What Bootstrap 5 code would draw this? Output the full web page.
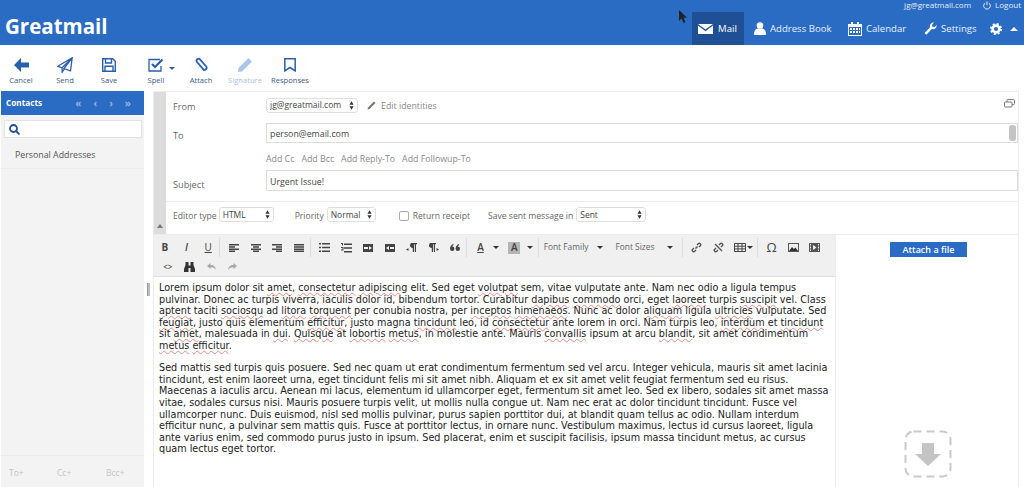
<!DOCTYPE html>
<html lang="en">
<head>
<meta charset="utf-8">
<title>Greatmail</title>
<link href="https://cdn.jsdelivr.net/npm/bootstrap@5.3.0/dist/css/bootstrap.min.css" rel="stylesheet">
<style>
html,body{height:487px;overflow:hidden;background:#fff}
body{font-family:"Open Sans",sans-serif;font-size:9px;color:#555;display:flex;flex-direction:column;width:1024px;position:relative}
.gm-head{height:45px;background:#2a6bc4;color:#fff;position:relative;flex:none}
.gm-logo{position:absolute;left:5px;top:12px;font-size:20.5px;font-weight:700;line-height:28px;font-family:"Open Sans",sans-serif}
.gm-top{position:absolute;right:3px;top:0;height:10px;font-size:8px;line-height:10px;color:#e6eefa;gap:12px}
.gm-nav{position:absolute;left:692px;right:0;top:12px;height:33px;font-size:9.6px;color:#e9f0fb}
.gm-nav-item{height:33px;padding-left:5px}
.gm-nav-item svg{margin-right:4px}
.gm-nav-txt{padding-top:2px}
.gm-active{background:#1f4f94;width:52px;padding-left:6px;color:#fff}
.gm-tools{height:46px;flex:none;position:relative;padding-left:0}
.gm-tool{position:absolute;top:12px;width:44px;margin-left:-22px;text-align:center;font-size:7.6px;line-height:10px;color:#3c5a86}
.gm-tool svg{display:block;margin:0 auto 2px;height:16px}
.gm-tool-off{color:#a9c0de}
.gm-work{flex:1;min-height:0;display:flex}
.gm-side{width:143px;margin-left:1px;background:#f3f3f3;flex:none;display:flex;flex-direction:column}
.gm-side-head{height:24px;background:#2a6bc4;color:#fff;font-weight:700;font-size:8.2px;padding:0 13px 0 5px}
.gm-side-arrows{color:#8db3e6;font-size:10px;gap:12px;font-weight:700}
.gm-search{height:18px;margin:5px 2px 0 3px;background:#fff;border:1px solid #e2e2e2;padding-left:4px}
.gm-addr{height:27px;margin-top:4px;padding:0 0 0 14px;line-height:27px;border-bottom:1px solid #ececec;font-size:8.8px;color:#555}
.gm-side-foot{margin-top:auto;height:32px;border-top:1px solid #ebebeb;color:#c3c3c3;font-size:8.5px;position:relative}
.gm-side-foot span{position:absolute;top:11px}
.gm-gutter{width:9px;flex:none;padding-left:3px}
.gm-handle{width:3px;height:13px;margin-top:192px;background:#bbb;border-left:1px solid #999}
.gm-main{flex:none;width:866px;border:1px solid #ececec;border-bottom:0;display:flex;flex-direction:column}
.gm-compose{display:flex;flex:none;height:142px}
.gm-strip{width:12px;background:#dcdcdc;flex:none;position:relative}
.gm-strip i{position:absolute;left:3px;bottom:6px;border:3.5px solid transparent;border-top:0;border-bottom:4px solid #777}
.gm-form{flex:1;min-width:0;position:relative;font-size:8.8px;color:#666}
.gm-lab{width:100px;padding-left:7px;flex:none;font-size:9.2px}
.gm-r1{height:26px}
.gm-r1 .gm-lab{padding-top:4px}
.gm-r2{height:30px}
.gm-r2 .gm-lab{padding-top:5px}
.gm-r3{height:22px;color:#8a8a8a;font-size:8.8px;padding-top:1px}
.gm-r3 span{margin-right:7px}
.gm-r4{height:32px;align-items:flex-start!important;border-bottom:1px solid #ececec}
.gm-r4 .gm-lab{padding-top:8px}
.gm-r5{height:31px;padding:0 0 6px 7px;font-size:8.6px}
.gm-r5>span{padding-top:4px}
.gm-field.form-control{height:20px;width:752px;border-radius:0;border:1px solid #dcdcdc;padding:2px 3px 0;font-size:8.8px;color:#444;font-family:inherit;box-shadow:none;min-height:0}
.gm-r4 .gm-field.form-control{height:21px}
.gm-sel.form-select{height:15px;min-height:0;border-radius:3px;border:1px solid #dedede;font-size:8.5px;padding:0 0 0 3px;line-height:12px;color:#444;font-family:inherit;background-size:5px 9px;background-position:right 3px center;background-image:url("data:image/svg+xml,%3Csvg xmlns='http://www.w3.org/2000/svg' viewBox='0 0 6 10'%3E%3Cpath d='M3 0l2.500 4h-5zM3 10l2.500-4h-5z' fill='%23333'/%3E%3C/svg%3E");width:auto}
.gm-sel.gm-w92{width:92px;margin-left:0}
.gm-sel.gm-w55{width:55px}
.gm-sel.gm-w49{width:49px}
.gm-sel.gm-w70{width:70px}
.gm-scroll{position:absolute;right:2px;top:33px;width:7px;height:16px;background:#c4c4c4;border-radius:3px}
.gm-popout{position:absolute;right:3px;top:7px}
.gm-check.form-check-input{width:10px;height:10px;margin:3px 4px 0 23px;border-radius:2px;border-color:#aaa}
.gm-edit{flex:1;min-height:0;display:flex;border-top:1px solid #ececec}
.gm-editcol{width:682px;flex:none;display:flex;flex-direction:column;border-right:1px solid #ececec}
.gm-mce{height:42px;background:#f0f0f0;border-bottom:1px solid #dedede;flex:none;padding-top:3px;color:#444}
.gm-mrow{height:19px}
.gm-btn{width:21.7px;height:19px;flex:none;font-size:9px}
.gm-grp{margin-right:3px;height:19px;padding-left:0}
.gm-sep{border-right:1px solid #dcdcdc}
.gm-drop{font-size:8.4px;color:#666;height:19px}
.gm-caret{display:inline-block;border:3px solid transparent;border-top:3px solid #333;border-bottom:0}
.gm-text{flex:1;padding:5px 0 0 5px;font-family:"DejaVu Sans",sans-serif;font-size:9.67px;line-height:11.6px;color:#222;white-space:nowrap;overflow:hidden}
.gm-text p{margin:0 0 10.6px}
.gm-sp{text-decoration:underline wavy #e58a86 1px;text-underline-offset:1px}
.gm-attach{flex:1;position:relative;text-align:center;padding-top:7px}
.gm-attach-btn.btn{width:77px;height:15px;padding:0;border-radius:0;border:1px solid #2a6bc4;background:#2a6bc4;color:#fff;font-size:9px;font-weight:600;line-height:12px;font-family:inherit;margin-left:3px}
.gm-dropzone{position:absolute;left:68px;top:195px}
.gm-cursor{position:absolute;left:678px;top:10px}
</style>
</head>
<body>
<header class="gm-head">
  <div class="gm-logo">Greatmail</div>
  <div class="gm-top d-flex align-items-center">
    <span>jg@greatmail.com</span>
    <span class="d-flex align-items-center gap-1">
      <svg width="8" height="9" viewBox="0 0 8 9" fill="none" stroke="#e6eefa" stroke-width="1"><path d="M2.200 2A3.300 3.300 0 1 0 5.800 2M4 .5v3.600"/></svg>Logout</span>
  </div>
  <nav class="gm-nav d-flex align-items-center">
    <div class="gm-nav-item gm-active d-flex align-items-center" style="margin-right:5px">
      <svg width="15" height="11" viewBox="0 0 15 11"><path d="M0 1h15L7.500 6.500zM0 2.600v8.400h15V2.600L7.500 8.200z" fill="#fff"/></svg><span class="gm-nav-txt" style="margin-left:1px">Mail</span></div>
    <div class="gm-nav-item d-flex align-items-center" style="width:94px">
      <svg width="12" height="13" viewBox="0 0 12 13"><circle cx="6" cy="3.500" r="3.300" fill="#fff"/><path d="M0 13c0-4 1-6 3.500-6.500h5C11 7 12 9 12 13z" fill="#fff"/></svg><span class="gm-nav-txt">Address Book</span></div>
    <div class="gm-nav-item d-flex align-items-center" style="width:76px">
      <svg width="14" height="14" viewBox="0 0 14 14"><path d="M0 2h3V0h2v2h4V0h2v2h3v12H0zM1 5v8h12V5z" fill="#fff"/><path d="M2 6h2v2H2zM5 6h2v2H5zM8 6h2v2H8zM11 6h1v2h-1zM2 9h2v2H2zM5 9h2v2H5zM8 9h2v2H8zM11 9h1v2h-1z" fill="#fff"/></svg><span class="gm-nav-txt">Calendar</span></div>
    <div class="gm-nav-item d-flex align-items-center" style="width:71px">
      <svg width="13" height="13" viewBox="0 0 13 13"><path d="M.5 11 6 5.500C5.300 3 7 .3 10 .5L8 3l.5 1.800 1.800.5L12.600 3c.4 3-2.300 4.800-4.800 4.100L2.300 12.700z" fill="#fff"/></svg><span class="gm-nav-txt">Settings</span></div>
    <svg width="12" height="12" viewBox="0 0 12 12"><circle cx="6" cy="6" r="3.400" fill="none" stroke="#fff" stroke-width="2.600"/><circle cx="6" cy="6" r="5" fill="none" stroke="#fff" stroke-width="2" stroke-dasharray="2 1.930"/></svg>
    <span style="margin-left:8px;border:4.500px solid transparent;border-top:0;border-bottom:4px solid #fff"></span>
  </nav>
</header>

<div class="gm-tools">
  <div class="gm-tool" style="left:21px"><svg width="15" height="14" viewBox="0 0 15 14"><path d="M7 0 0 7l7 7V9.500h8v-5H7z" fill="#2a5fae"/></svg>Cancel</div>
  <div class="gm-tool" style="left:65px"><svg width="16" height="16" viewBox="0 0 16 16" fill="none" stroke="#2a5fae" stroke-width="1.300"><path d="M15.200.8.800 9.300l4.300 1.500zM15.200.8 7 11.500l6.500 2.300zM5.100 10.800v4.400l2.400-3.300"/></svg>Send</div>
  <div class="gm-tool" style="left:109px"><svg width="14" height="14" viewBox="0 0 14 14" fill="none" stroke="#2a5fae" stroke-width="1.400"><path d="M.7.700h10l2.600 2.600v10H.7z"/><path d="M3.500 1v4h6V1M3 13V8.300h8V13"/></svg>Save</div>
  <div class="gm-tool" style="left:156px"><svg width="16" height="14" viewBox="0 0 16 14" fill="none" stroke="#2a5fae"><path stroke-width="1.300" d="M13 8v5H1V1.500h11"/><path stroke-width="2.200" d="M4 6l3 3 7.500-7.500"/></svg>Spell</div>
  <span class="position-absolute" style="left:169px;top:22px;border:3.500px solid transparent;border-top:3.500px solid #2a5fae;border-bottom:0"></span>
  <div class="gm-tool" style="left:201px"><svg width="14" height="15" viewBox="0 0 14 15" fill="none" stroke="#2a5fae" stroke-width="1.800"><path d="M10.500 13.200 3 4.500C1.500 2.500 4 0 6 1.800l6.200 7.200c1.500 2-1 4.500-3 2.700L4.300 6"/></svg>Attach</div>
  <div class="gm-tool gm-tool-off" style="left:245px"><svg width="14" height="14" viewBox="0 0 14 14"><path d="M10.500 0 14 3.500 4 13.500 0 14l.5-4z" fill="#a9c6e8"/></svg>Signature</div>
  <div class="gm-tool" style="left:290px"><svg width="12" height="14" viewBox="0 0 12 14" fill="none" stroke="#2a5fae" stroke-width="1.500"><path d="M.8.800h10.400v12L6 9.500.8 12.800z"/></svg>Responses</div>
</div>

<div class="gm-work">
  <aside class="gm-side">
    <div class="gm-side-head d-flex align-items-center justify-content-between">
      <span>Contacts</span>
      <span class="gm-side-arrows d-flex"><span>«</span><span>‹</span><span>›</span><span>»</span></span>
    </div>
    <div class="gm-search d-flex align-items-center">
      <svg width="11" height="11" viewBox="0 0 11 11" fill="none" stroke="#1f4f94" stroke-width="1.800"><circle cx="4.500" cy="4.500" r="3.500"/><path d="m7 7 3.500 3.500"/></svg>
    </div>
    <div class="gm-addr">Personal Addresses</div>
    <div class="gm-side-foot"><span style="left:8px">To+</span><span style="left:56px">Cc+</span><span style="left:105px">Bcc+</span></div>
  </aside>
  <div class="gm-gutter"><div class="gm-handle"></div></div>
  <main class="gm-main">
    <div class="gm-compose">
      <div class="gm-strip"><i></i></div>
      <div class="gm-form">
        <div class="gm-r1 d-flex align-items-center">
          <div class="gm-lab">From</div>
          <select class="form-select gm-sel gm-w92"><option>jg@greatmail.com</option></select>
          <svg width="9" height="9" viewBox="0 0 9 9" style="margin-left:9px"><path d="M7 .5 8.500 2 2.500 8 .5 8.500 1 6.500z" fill="#777"/></svg>
          <span style="margin-left:5px;padding-top:3px;color:#888">Edit identities</span>
        </div>
        <svg class="gm-popout" width="11" height="9" viewBox="0 0 11 9" fill="#fff" stroke="#777"><rect x="3" y=".5" width="7.500" height="5" rx="1"/><rect x=".5" y="3" width="7.500" height="5" rx="1"/></svg>
        <div class="gm-r2 d-flex align-items-center">
          <div class="gm-lab">To</div>
          <input class="form-control gm-field" value="person@email.com">
        </div>
        <div class="gm-scroll"></div>
        <div class="gm-r3 d-flex align-items-center">
          <div class="gm-lab"></div>
          <span>Add Cc</span><span>Add Bcc</span><span>Add Reply-To</span><span>Add Followup-To</span>
        </div>
        <div class="gm-r4 d-flex">
          <div class="gm-lab">Subject</div>
          <input class="form-control gm-field" value="Urgent Issue!">
        </div>
        <div class="gm-r5 d-flex align-items-center">
          <span style="margin-right:2px">Editor type</span>
          <select class="form-select gm-sel gm-w55"><option>HTML</option></select>
          <span style="margin-left:21px;margin-right:3px">Priority</span>
          <select class="form-select gm-sel gm-w49"><option>Normal</option></select>
          <input class="form-check-input gm-check" type="checkbox">
          <span style="margin-right:18px">Return receipt</span>
          <span style="margin-right:3px">Save sent message in</span>
          <select class="form-select gm-sel gm-w70"><option>Sent</option></select>
        </div>
      </div>
    </div>
    <div class="gm-edit">
      <div class="gm-editcol">
        <div class="gm-mce">
          <div class="gm-mrow d-flex">
            <div class="gm-grp gm-sep d-flex">
              <div class="gm-btn d-flex align-items-center justify-content-center fw-bold" style="font-size:10px">B</div>
              <div class="gm-btn d-flex align-items-center justify-content-center fst-italic fw-semibold" style="font-size:10px">I</div>
              <div class="gm-btn d-flex align-items-center justify-content-center text-decoration-underline" style="font-size:10px">U</div>
            </div>
            <div class="gm-grp gm-sep d-flex">
              <div class="gm-btn d-flex align-items-center justify-content-center"><svg width="10" height="8" viewBox="0 0 10 8" fill="#444"><path d="M0 0h10v1.500H0zM0 2.200h6v1.500H0zM0 4.400h10v1.500H0zM0 6.500h6V8H0z"/></svg></div>
              <div class="gm-btn d-flex align-items-center justify-content-center"><svg width="10" height="8" viewBox="0 0 10 8" fill="#444"><path d="M0 0h10v1.500H0zM2 2.200h6v1.500H2zM0 4.400h10v1.500H0zM2 6.500h6V8H2z"/></svg></div>
              <div class="gm-btn d-flex align-items-center justify-content-center"><svg width="10" height="8" viewBox="0 0 10 8" fill="#444"><path d="M0 0h10v1.500H0zM4 2.200h6v1.500H4zM0 4.400h10v1.500H0zM4 6.500h6V8H4z"/></svg></div>
              <div class="gm-btn d-flex align-items-center justify-content-center"><svg width="10" height="8" viewBox="0 0 10 8" fill="#444"><path d="M0 0h10v1.500H0zM0 2.200h10v1.500H0zM0 4.400h10v1.500H0zM0 6.500h10V8H0z"/></svg></div>
            </div>
            <div class="gm-grp gm-sep d-flex">
              <div class="gm-btn d-flex align-items-center justify-content-center"><svg width="11" height="9" viewBox="0 0 11 9" fill="#444"><path d="M0 0h2v1.500H0zM3 0h8v1.500H3zM0 3.700h2v1.500H0zM3 3.700h8v1.500H3zM0 7.500h2V9H0zM3 7.500h8V9H3z"/></svg></div>
              <div class="gm-btn d-flex align-items-center justify-content-center"><svg width="11" height="10" viewBox="0 0 11 10" fill="#444"><path d="M0 0h2v2.500H1V1H0zM3 .5h8V2H3zM0 4h2.500v3.500H0v-1h1.500V5H0zM3 4.300h8v1.500H3zM3 8h8v1.500H3z"/></svg></div>
              <div class="gm-btn d-flex align-items-center justify-content-center"><svg width="10" height="8" viewBox="0 0 10 8" fill="#444"><path d="M0 0h10v8H0zM1 3v2h4V3zM6 2v4l3-2z" fill-rule="evenodd"/></svg></div>
              <div class="gm-btn d-flex align-items-center justify-content-center"><svg width="10" height="8" viewBox="0 0 10 8" fill="#444"><path d="M0 0h10v8H0zM5 3v2h4V3zM4 2v4L1 4z" fill-rule="evenodd"/></svg></div>
              <div class="gm-btn d-flex align-items-center justify-content-center"><svg width="11" height="9" viewBox="0 0 11 9" fill="#444"><path d="M5 0h6v1.200h-1V9H8.800V1.200H8V9H6.800V5C5 5 4 4 4 2.500S5 0 5 0zM0 6.500 2.500 5v3z"/></svg></div>
              <div class="gm-btn d-flex align-items-center justify-content-center"><svg width="11" height="9" viewBox="0 0 11 9" fill="#444"><path d="M2 0h6v1.200H7V9H5.800V1.200H5V9H3.800V5C2 5 1 4 1 2.500S2 0 2 0zM11 6.500 8.500 5v3z"/></svg></div>
              <div class="gm-btn d-flex align-items-center justify-content-center"><svg width="10" height="7" viewBox="0 0 10 7" fill="#444"><circle cx="2.200" cy="4.700" r="2.200"/><circle cx="7.800" cy="4.700" r="2.200"/><path d="M.2 4C.5 2 1.500.5 3.500 0v1C2.500 1.500 2 3 2 3.500zM5.800 4C6.100 2 7.100.5 9.100 0v1c-1 .5-1.500 2-1.500 2.500z"/></svg></div>
            </div>
            <div class="gm-grp gm-sep d-flex align-items-center" style="width:69px">
              <span class="d-flex align-items-center justify-content-center gm-btn fw-semibold text-decoration-underline" style="font-size:10px">A</span>
              <span class="gm-caret" style="margin-left:2px"></span>
              <span class="d-flex align-items-center justify-content-center" style="width:12px;height:12px;background:#b5b5b5;margin-left:9px;font-size:10px;font-weight:600">A</span>
              <span class="gm-caret" style="margin-left:7px"></span>
            </div>
            <div class="gm-grp gm-sep d-flex align-items-center gm-drop" style="width:141px;padding-left:2px">
              <span>Font Family</span><span class="gm-caret" style="margin-left:9px"></span>
              <span style="margin-left:12px">Font Sizes</span><span class="gm-caret" style="margin-left:13px"></span>
            </div>
            <div class="gm-grp gm-sep d-flex align-items-center" style="width:72px">
              <div class="gm-btn d-flex align-items-center justify-content-center"><svg width="11" height="11" viewBox="0 0 11 11" fill="none" stroke="#555" stroke-width="1.400"><path d="M4.500 6.500l2-2M6 3l1.500-1.500c1-1 3 1 2 2L8 5M5 8 3.500 9.500c-1 1-3-1-2-2L3 6"/></svg></div>
              <div class="gm-btn d-flex align-items-center justify-content-center"><svg width="11" height="11" viewBox="0 0 11 11" fill="none" stroke="#555" stroke-width="1.400"><path d="M6 3l1.500-1.500c1-1 3 1 2 2L8 5M5 8 3.500 9.500c-1 1-3-1-2-2L3 6M2 2l7 7"/></svg></div>
              <span class="d-flex align-items-center" style="margin-left:5px"><svg width="12" height="9" viewBox="0 0 12 9" fill="none" stroke="#444"><path d="M.5.500h11v8H.5zM.5 3.200h11M.5 5.900h11M4 .5v8M8 .5v8"/></svg><span class="gm-caret" style="margin-left:1px"></span></span>
            </div>
            <div class="d-flex">
              <div class="gm-btn d-flex align-items-center justify-content-center" style="font-size:13px">Ω</div>
              <div class="gm-btn d-flex align-items-center justify-content-center"><svg width="11" height="9" viewBox="0 0 11 9"><path d="M0 0h11v9H0z" fill="#555"/><path d="M1 1h9v7H1z" fill="#eee"/><path d="M1 8l3-4 2 2 1.500-1.500L10 8z" fill="#333"/></svg></div>
              <div class="gm-btn d-flex align-items-center justify-content-center"><svg width="11" height="9" viewBox="0 0 11 9"><path d="M0 0h11v9H0zM2 3.500V5.500H1V3.500zM2 6.500V8H1V6.500zM2 1v1.500H1V1zM10 3.500V5.500H9V3.500zM10 6.500V8H9V6.500zM10 1v1.500H9V1zM4 2v5l3.500-2.500z" fill="#555" fill-rule="evenodd"/></svg></div>
            </div>
          </div>
          <div class="gm-mrow d-flex align-items-center" style="padding-left:3px">
            <div class="gm-btn d-flex align-items-center justify-content-center" style="font-size:8px;font-weight:600">&lt;&gt;</div>
            <div class="gm-btn d-flex align-items-center justify-content-center"><svg width="11" height="10" viewBox="0 0 11 10" fill="#333"><path d="M1.500 0h3v3.500H6.500V0h3v3L11 7v3H6.500V6h-2v4H0V7l1.500-4z"/></svg></div>
            <div class="gm-btn d-flex align-items-center justify-content-center"><svg width="9" height="7" viewBox="0 0 9 7" fill="#a8a8a8"><path d="M0 3 3.500 0v2C7 2 8.500 4 9 7 7.500 5 6 4.300 3.500 4.300V6z"/></svg></div>
            <div class="gm-btn d-flex align-items-center justify-content-center"><svg width="9" height="7" viewBox="0 0 9 7" fill="#a8a8a8"><path d="M9 3 5.500 0v2C2 2 .5 4 0 7c1.500-2 3-2.700 5.500-2.700V6z"/></svg></div>
          </div>
        </div>
        <div class="gm-text">
          <p>Lorem ipsum dolor sit <span class="gm-sp">amet</span>, <span class="gm-sp">consectetur</span> <span class="gm-sp">adipiscing</span> elit. Sed eget <span class="gm-sp">volutpat</span> sem, vitae vulputate ante. Nam nec odio a ligula tempus<br>
          pulvinar. Donec ac turpis viverra, iaculis dolor id, bibendum tortor. Curabitur <span class="gm-sp">dapibus</span> <span class="gm-sp">commodo</span> orci, eget <span class="gm-sp">laoreet</span> turpis <span class="gm-sp">suscipit</span> vel. Class<br>
          <span class="gm-sp">aptent</span> taciti <span class="gm-sp">sociosqu</span> ad <span class="gm-sp">litora</span> <span class="gm-sp">torquent</span> per conubia nostra, per <span class="gm-sp">inceptos</span> <span class="gm-sp">himenaeos</span>. Nunc ac dolor <span class="gm-sp">aliquam</span> ligula <span class="gm-sp">ultricies</span> vulputate. Sed<br>
          <span class="gm-sp">feugiat</span>, justo quis elementum <span class="gm-sp">efficitur</span>, justo magna <span class="gm-sp">tincidunt</span> leo, id <span class="gm-sp">consectetur</span> ante lorem in orci. Nam turpis leo, <span class="gm-sp">interdum</span> et <span class="gm-sp">tincidunt</span><br>
          sit <span class="gm-sp">amet</span>, malesuada in <span class="gm-sp">dui</span>. <span class="gm-sp">Quisque</span> at <span class="gm-sp">lobortis</span> <span class="gm-sp">metus</span>, in molestie ante. Mauris <span class="gm-sp">convallis</span> ipsum at arcu <span class="gm-sp">blandit</span>, sit amet condimentum<br>
          <span class="gm-sp">metus</span> <span class="gm-sp">efficitur</span>.</p>
          <p>Sed mattis sed turpis quis posuere. Sed nec quam ut erat condimentum fermentum sed vel arcu. Integer vehicula, mauris sit amet lacinia<br>
          tincidunt, est enim laoreet urna, eget tincidunt felis mi sit amet nibh. Aliquam et ex sit amet velit feugiat fermentum sed eu risus.<br>
          Maecenas a iaculis arcu. Aenean mi lacus, elementum id ullamcorper eget, fermentum sit amet leo. Sed ex libero, sodales sit amet massa<br>
          vitae, sodales cursus nisi. Mauris posuere turpis velit, ut mollis nulla congue ut. Nam nec erat ac dolor tincidunt tincidunt. Fusce vel<br>
          ullamcorper nunc. Duis euismod, nisl sed mollis pulvinar, purus sapien porttitor dui, at blandit quam tellus ac odio. Nullam interdum<br>
          efficitur nunc, a pulvinar sem mattis quis. Fusce at porttitor lectus, in ornare nunc. Vestibulum maximus, lectus id cursus laoreet, ligula<br>
          ante varius enim, sed commodo purus justo in ipsum. Sed placerat, enim et suscipit facilisis, ipsum massa tincidunt metus, ac cursus<br>
          quam lectus eget tortor.</p>
        </div>
      </div>
      <div class="gm-attach">
        <button class="btn gm-attach-btn" type="button">Attach a file</button>
        <svg class="gm-dropzone" width="48" height="48" viewBox="0 0 48 48" fill="none"><rect x="1.500" y="1.500" width="45" height="45" rx="8" stroke="#c9c9c9" stroke-width="2" stroke-dasharray="8 5"/><path d="M18 13h12v11h7L24 36 11 24h7z" fill="#c4c4c4"/></svg>
      </div>
    </div>
  </main>
</div>
<svg class="gm-cursor" width="9" height="14" viewBox="0 0 9 14"><path d="M1 0v11l2.500-2.500L5.500 13l2-1-2-4.300H9z" fill="#222"/></svg>
</body>
</html>
